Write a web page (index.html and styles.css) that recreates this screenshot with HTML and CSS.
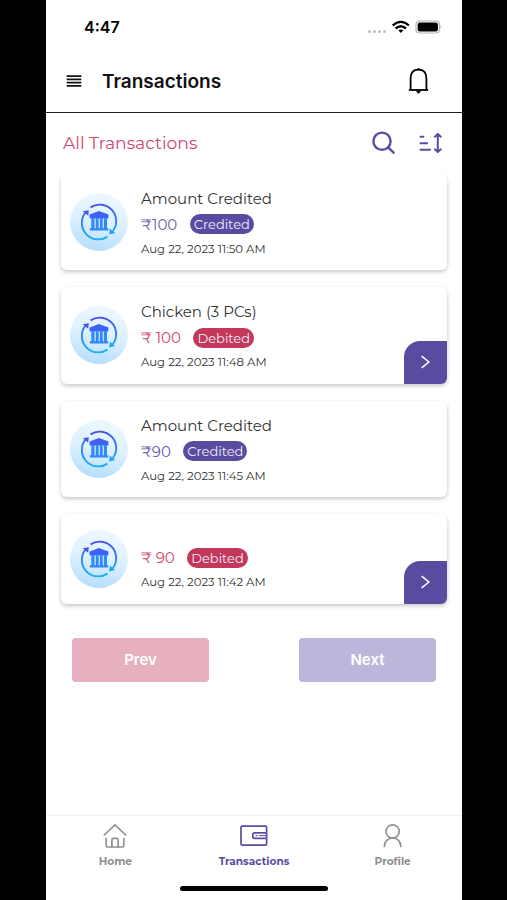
FILE: index.html
```
<!DOCTYPE html>
<html lang="en">
<head>
    <meta charset="utf-8">
    <meta name="viewport" content="width=device-width, initial-scale=1.0">
    <title>Transactions</title>
    <link rel="stylesheet" href="styles.css">
</head>
<body>
    <!-- shared card icon -->
    <svg class="defs" width="0" height="0">
        <defs>
            <linearGradient id="blue" gradientUnits="userSpaceOnUse" x1="0" y1="11" x2="0" y2="47">
                <stop offset="0" stop-color="#4a4fe8"/>
                <stop offset="1" stop-color="#1cb4f8"/>
            </linearGradient>
            <linearGradient id="sky" x1="0.6" y1="0" x2="0.4" y2="1">
                <stop offset="0" stop-color="#ecf8ff"/>
                <stop offset="0.5" stop-color="#dcf1ff"/>
                <stop offset="1" stop-color="#b5defd"/>
            </linearGradient>
            <symbol id="bank" viewBox="0 0 58 58">
                <circle cx="29" cy="29" r="29" fill="url(#sky)"/>
                <g fill="none" stroke="url(#blue)" stroke-width="1.9">
                    <path d="M20.5 14.4A16.5 16.5 0 0 1 42.5 38.5"/>
                    <path d="M37.5 43.6A16.5 16.5 0 0 1 15.5 19.5"/>
                </g>
                <path d="M12.8 18.3L18.8 17.3L18.2 22.8Z" fill="#4058f0"/>
                <path d="M45.2 40L39.2 41.5L39.8 35.5Z" fill="#25a4f8"/>
                <path d="M29 18L38.4 21.4V25.4H19.6V21.4Z" fill="#3e63f4"/>
                <path d="M21.3 25.2h3.2v10h-3.2zM25.7 25.2h2.9v10h-2.9zM29.8 25.2h2.9v10h-2.9zM33.8 25.2h3.2v10h-3.2zM19.8 35.2h18.4v2.4H19.8z" fill="#3188f7"/>
            </symbol>
        </defs>
    </svg>
    <div class="phone">
        <div class="status">
            <span class="time">4:47</span>
            <svg width="76" height="16" viewBox="0 0 76 16">
                <g fill="#bdbdbd">
                    <circle cx="3.5" cy="12.6" r="1.5"/><circle cx="8.5" cy="12.6" r="1.5"/><circle cx="13.5" cy="12.6" r="1.5"/><circle cx="18.5" cy="12.6" r="1.5"/>
                </g>
                <g transform="translate(1 0.8)">
                    <g fill="none" stroke="#000" stroke-width="2.3">
                        <path d="M25.7 5.7Q33.8-1.5 41.9 5.7"/>
                        <path d="M28.6 8.7Q33.8 4.3 39 8.7"/>
                    </g>
                    <path d="M31.3 10.5Q33.8 8.9 36.3 10.5L33.8 13.3Z"/>
                    <rect x="49" y="1.2" width="23.5" height="12" rx="3.5" fill="none" stroke="#b5b5b5" stroke-width="1.2"/>
                    <rect x="50.7" y="2.8" width="20.2" height="8.8" rx="2"/>
                    <path d="M73.5 5.3q1.6 1.9 0 3.8z" fill="#b5b5b5"/>
                </g>
            </svg>
        </div>
        <header class="header">
            <svg width="16" height="12" viewBox="0 0 16 12">
                <path d="M0.7 1.1h14.6M0.7 4.4h14.6M0.7 7.6h14.6M0.7 10.9h14.6" stroke="#111" stroke-width="1.7"/>
            </svg>
            <h1>Transactions</h1>
            <svg class="bell" width="21" height="28" viewBox="0 0 21 28" fill="none" stroke="#000" stroke-width="1.8">
                <path d="M0.9 23h19.2"/>
                <path d="M2.6 23V11.5C2.6 5.8 5.7 2.7 10.5 2.7S18.4 5.8 18.4 11.5V23"/>
                <path d="M8.7 2.7Q10.5 -0.8 12.3 2.7ZM7.9 23.6Q10.5 29.4 13.1 23.6Z" fill="#000" stroke="none"/>
            </svg>
        </header>
        <div class="heading">
            <h2>All Transactions</h2>
            <svg width="24" height="24" viewBox="0 0 24 24" fill="none" stroke="#5c4da0" stroke-width="2.4">
                <circle cx="10" cy="10.2" r="8.6"/>
                <path d="M16.2 16.3L21.6 21.7" stroke-linecap="round"/>
            </svg>
            <svg class="sort" width="24" height="20" viewBox="0 0 24 20" fill="none" stroke="#5c4da0" stroke-width="2" stroke-linecap="round" stroke-linejoin="round">
                <path d="M1.5 3.7h2.8M1.5 10.2h6.6M1.5 16.8h9.6"/>
                <path d="M18.8 1.2v17.6M15.8 3.7L18.8 1L21.8 3.7M15.8 16.3L18.8 19L21.8 16.3"/>
            </svg>
        </div>
        <div class="list">
            <div class="card">
                <svg class="icon"><use href="#bank"/></svg>
                <div class="info">
                    <div class="name">Amount Credited</div>
                    <div class="amount">₹100 <span class="tag">Credited</span></div>
                    <div class="date">Aug 22, 2023 11:50 AM</div>
                </div>
            </div>
            <div class="card">
                <svg class="icon"><use href="#bank"/></svg>
                <div class="info">
                    <div class="name">Chicken (3 PCs)</div>
                    <div class="amount debit">₹ 100 <span class="tag">Debited</span></div>
                    <div class="date">Aug 22, 2023 11:48 AM</div>
                </div>
                <div class="more">
                    <svg width="10" height="14" viewBox="0 0 10 14" fill="none" stroke="#fff" stroke-width="1.5"><path d="M0.6 1.2L7.9 7L0.6 12.8"/></svg>
                </div>
            </div>
            <div class="card">
                <svg class="icon"><use href="#bank"/></svg>
                <div class="info">
                    <div class="name">Amount Credited</div>
                    <div class="amount">₹90 <span class="tag">Credited</span></div>
                    <div class="date">Aug 22, 2023 11:45 AM</div>
                </div>
            </div>
            <div class="card short">
                <svg class="icon"><use href="#bank"/></svg>
                <div class="info">
                    <div class="name"></div>
                    <div class="amount debit">₹ 90 <span class="tag">Debited</span></div>
                    <div class="date">Aug 22, 2023 11:42 AM</div>
                </div>
                <div class="more">
                    <svg width="10" height="14" viewBox="0 0 10 14" fill="none" stroke="#fff" stroke-width="1.5"><path d="M0.6 1.2L7.9 7L0.6 12.8"/></svg>
                </div>
            </div>
            <div class="pager">
                <button class="prev">Prev</button>
                <button class="next">Next</button>
            </div>
        </div>
        <nav class="tabs">
            <div class="tab">
                <svg width="24" height="26" viewBox="0 0 24 26" fill="none" stroke="#929292" stroke-width="1.7" stroke-linecap="round" stroke-linejoin="round">
                    <path d="M1.3 12L12 1.8L22.7 12"/>
                    <path d="M3.2 15.5V22.2Q3.2 24 5 24H19Q20.8 24 20.8 22.2V15.5"/>
                    <path d="M8.9 24V17Q8.9 15.3 10.5 15.3H13.5Q15.1 15.3 15.1 17V24"/>
                </svg>
                <span>Home</span>
            </div>
            <div class="tab active">
                <svg width="28" height="26" viewBox="0 0 28 26" fill="none" stroke="#5c4da0" stroke-width="1.7">
                    <rect x="1" y="3.2" width="25.6" height="19" rx="1.2"/>
                    <path d="M26.6 9.8H14.8Q12.8 9.8 12.8 11.8V13.3Q12.8 15.3 14.8 15.3H26.6"/>
                    <path d="M15.6 12.6h2.2M19 12.6h7.6" stroke-width="1"/>
                </svg>
                <span>Transactions</span>
            </div>
            <div class="tab">
                <svg width="20" height="26" viewBox="0 0 20 26" fill="none" stroke="#929292" stroke-width="1.7" stroke-linecap="round">
                    <circle cx="9.6" cy="8.4" r="6.6"/>
                    <path d="M1.4 23.4C1.4 18.3 4.8 15 9.6 15S17.8 18.3 17.8 23.4"/>
                </svg>
                <span>Profile</span>
            </div>
        </nav>
        <div class="home-bar"></div>
    </div>
</body>
</html>
```
FILE: styles.css
```
* {
    box-sizing: border-box;
}

body {
    margin: 0;
    background-color: black;
    font-family: Montserrat, Inter, sans-serif;
}

svg {
    display: block;
    flex: none;
}

.defs {
    position: absolute;
}

.phone {
    display: flex;
    flex-direction: column;
    width: 416px;
    height: 900px;
    margin-left: 46px;
    background-color: white;
}

.status {
    display: flex;
    justify-content: space-between;
    align-items: center;
    height: 54px;
    padding: 0 20px 0 38px;
}

.time {
    font-family: Inter, sans-serif;
    font-size: 16px;
    font-weight: 600;
}

.header {
    display: flex;
    align-items: center;
    height: 59px;
    padding: 0 33px 4px 20px;
    border-bottom: 1px solid #222;
}

.header h1 {
    margin: 0 0 0 20px;
    font-family: Inter, sans-serif;
    font-size: 19px;
    font-weight: 600;
    color: #111;
}

.bell {
    margin-left: auto;
}

.heading {
    display: flex;
    align-items: center;
    height: 60.5px;
    padding: 0 19px 0 17px;
}

.heading h2 {
    flex: 1;
    margin: 0 0 2px;
    font-size: 17.2px;
    font-weight: 400;
    color: #d0486b;
}

.sort {
    margin-left: 23px;
}

.list {
    flex: 1;
    padding: 0 15px;
    overflow: hidden;
}

.card {
    display: flex;
    align-items: center;
    height: 96.5px;
    margin-bottom: 17px;
    padding-left: 9px;
    border-radius: 6px;
    box-shadow: 0 2px 4px rgba(0, 0, 0, 0.22);
}

.card.short {
    height: 89.5px;
}

.icon {
    width: 58px;
    height: 58px;
}

.info {
    flex: 1;
    align-self: flex-start;
    padding: 12px 0 0 13px;
    color: #333;
}

.name {
    height: 25px;
    font-size: 15px;
    line-height: 25px;
}

.short .name {
    height: 18px;
}

.amount {
    display: flex;
    align-items: center;
    height: 27px;
    font-size: 15px;
    color: #6a5bb0;
}

.debit {
    color: #d0486b;
}

.tag {
    height: 20px;
    margin-left: 12.5px;
    padding: 0 4px;
    border-radius: 10px;
    background-color: #5a4ba1;
    color: #f1edfb;
    font-size: 13px;
    line-height: 20px;
}

.debit .tag {
    background-color: #c2385a;
}

.date {
    font-size: 11.7px;
    line-height: 22px;
}

.more {
    display: flex;
    justify-content: center;
    align-items: center;
    align-self: flex-end;
    width: 43px;
    height: 43px;
    border-radius: 16px 0 6px 0;
    background-color: #5a4ba1;
}

.pager {
    display: flex;
    justify-content: space-between;
    padding: 17px 11px 0;
}

.pager button {
    width: 137px;
    height: 44px;
    border: 0;
    border-radius: 4px;
    color: white;
    font-family: Inter, sans-serif;
    font-size: 15px;
    font-weight: 600;
}

.prev {
    background-color: #e7b0bf;
}

.next {
    background-color: #bcb7da;
}

.tabs {
    display: flex;
    height: 71px;
    border-top: 1px solid #f0f0f0;
}

.tab {
    display: flex;
    flex: 1;
    flex-direction: column;
    align-items: center;
    padding-top: 7px;
    color: #8e8e8e;
    font-size: 10.6px;
    font-weight: 700;
}

.tab span {
    margin-top: 6px;
}

.active {
    color: #5c4da0;
}

.home-bar {
    width: 148px;
    height: 5px;
    margin: 0 auto 9px;
    border-radius: 3px;
    background-color: black;
}
```
